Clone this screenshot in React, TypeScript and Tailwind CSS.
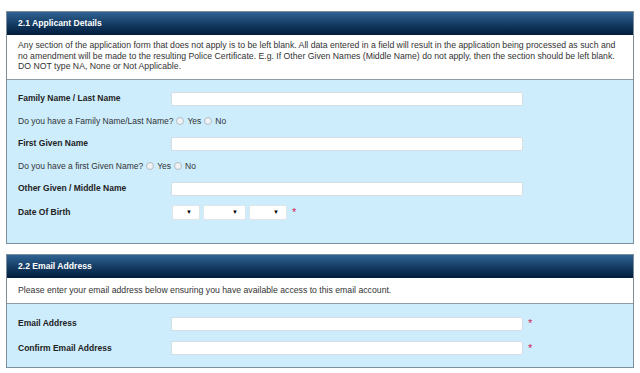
import React from 'react';

const Radio: React.FC = () => (
  <span className="inline-block w-[8px] h-[8px] rounded-full border border-[#b3bdc5] bg-[#eef2f5] mx-[3px] align-middle" />
);

const TextInput: React.FC = () => (
  <div className="w-[352px] h-[14px] bg-white border border-[#d5dde3] rounded-[2px]" />
);

const Star: React.FC = () => <span className="text-[#d0245a] text-[11px] leading-none ml-[5px]">*</span>;

const Select: React.FC<{ w: string }> = ({ w }) => (
  <div className={`${w} h-[15px] bg-white border border-[#dfe6ea] rounded-[2px] flex items-center justify-end pr-[7px]`}>
    <span className="text-[6px] text-black leading-none">▼</span>
  </div>
);

const Header: React.FC<{ title: string }> = ({ title }) => (
  <div className="h-[23px] bg-gradient-to-b from-[#2f6394] to-[#021c3b] px-[11px] flex items-center">
    <span className="text-white font-bold text-[8.6px]">{title}</span>
  </div>
);

const Row: React.FC<{ label: string; children?: React.ReactNode; h?: string }> = ({ label, children, h = 'h-[22.5px]' }) => (
  <div className={`flex items-center ${h}`}>
    <div className="w-[153px] font-bold text-[8.5px] text-[#222]">{label}</div>
    <div className="flex items-center">{children}</div>
  </div>
);

const RadioRow: React.FC<{ question: string }> = ({ question }) => (
  <div className="flex items-center h-[22.5px] text-[8.5px] text-[#333]">
    <span>{question}</span>
    <Radio />
    <span>Yes</span>
    <Radio />
    <span>No</span>
  </div>
);

export default function App() {
  return (
    <div className="w-[640px] h-[373px] bg-white pt-[11px] px-[6px] overflow-hidden" style={{ fontFamily: '"Liberation Sans", Arial, sans-serif' }}>
      <div className="border border-[#7d8d99]">
        <Header title="2.1 Applicant Details" />
        <div className="bg-white px-[11px] pt-[5px] pb-[7px] text-[8.7px] leading-[10.5px] text-[#333] border-b border-[#8e9ba4] whitespace-nowrap">
          Any section of the application form that does not apply is to be left blank. All data entered in a field will result in the application being processed as such and
          <br />
          no amendment will be made to the resulting Police Certificate. E.g. If Other Given Names (Middle Name) do not apply, then the section should be left blank.
          <br />
          DO NOT type NA, None or Not Applicable.
        </div>
        <div className="bg-[#cdedfd] px-[11px] pt-[8px] pb-[19px]">
          <Row label="Family Name / Last Name"><TextInput /></Row>
          <RadioRow question="Do you have a Family Name/Last Name?" />
          <Row label="First Given Name"><TextInput /></Row>
          <RadioRow question="Do you have a first Given Name?" />
          <Row label="Other Given / Middle Name"><TextInput /></Row>
          <Row label="Date Of Birth" h="h-[24px]">
            <div className="flex items-center gap-[3px] ml-[1px]">
              <Select w="w-[28px]" />
              <Select w="w-[43px]" />
              <Select w="w-[38px]" />
            </div>
            <Star />
          </Row>
        </div>
      </div>

      <div className="border border-[#7d8d99] mt-[10px]">
        <Header title="2.2 Email Address" />
        <div className="bg-white px-[11px] py-[7px] text-[8.7px] leading-[10.5px] text-[#333] border-b border-[#8e9ba4]">
          Please enter your email address below ensuring you have available access to this email account.
        </div>
        <div className="bg-[#cdedfd] px-[11px] pt-[8px] pb-[6px]">
          <Row label="Email Address" h="h-[24.5px]"><TextInput /><Star /></Row>
          <Row label="Confirm Email Address" h="h-[24.5px]"><TextInput /><Star /></Row>
        </div>
      </div>
    </div>
  );
}
